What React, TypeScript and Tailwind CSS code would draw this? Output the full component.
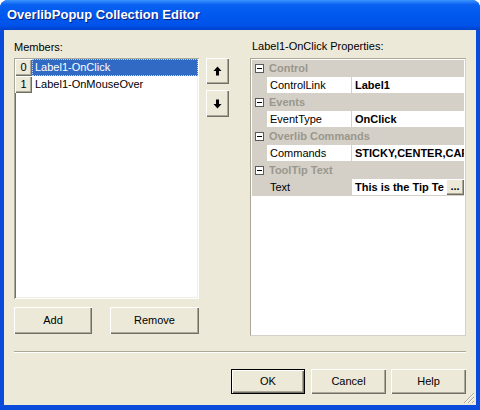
import React from "react";

const raised =
  "bg-[#ECE9D8] shadow-[inset_1px_1px_#ffffff,inset_-1px_-1px_#716f64,inset_-2px_-2px_#aca899]";

function Btn({ label, className = "" }: { label: string; className?: string }) {
  return (
    <div className={`flex items-center justify-center text-[11px] text-black ${raised} ${className}`}>
      {label}
    </div>
  );
}

function Arrow({ down = false }: { down?: boolean }) {
  return (
    <svg width="9" height="10" viewBox="0 0 9 10" className={down ? "rotate-180" : ""}>
      <path d="M4.5 0.5 L8.5 5 L6 5 L6 9.5 L3 9.5 L3 5 L0.5 5 Z" fill="#000" />
    </svg>
  );
}

function Minus() {
  return (
    <div className="w-[9px] h-[9px] border border-[#5a5a5a] bg-white flex items-center justify-center">
      <div className="w-[5px] h-px bg-black" />
    </div>
  );
}

function Category({ name }: { name: string }) {
  return (
    <div className="flex h-[17px] items-center bg-[#D4D0C8]">
      <div className="w-[15px] flex justify-center">
        <Minus />
      </div>
      <span className="pl-[2px] font-bold text-[#9a978c]">{name}</span>
    </div>
  );
}

function Prop({
  name,
  value,
  selected = false,
  ellipsis = false,
}: {
  name: string;
  value: string;
  selected?: boolean;
  ellipsis?: boolean;
}) {
  return (
    <div className="flex h-[17px] border-b border-[#D4D0C8]">
      <div className="w-[15px] bg-[#D4D0C8]" />
      <div
        className={`w-[85px] border-r border-[#D4D0C8] pl-[3px] leading-[16px] ${
          selected ? "bg-[#D4D0C8]" : "bg-white"
        }`}
      >
        {name}
      </div>
      <div className="flex-1 flex overflow-hidden bg-white">
        <span className="flex-1 pl-[3px] font-bold leading-[16px] whitespace-nowrap overflow-hidden">
          {value}
        </span>
        {ellipsis && (
          <div className={`w-[18px] h-[16px] flex items-end justify-center pb-[3px] font-bold leading-none ${raised}`}>
            ...
          </div>
        )}
      </div>
    </div>
  );
}

export default function App() {
  return (
    <div
      className="w-[480px] h-[410px] flex flex-col bg-[#0A4BDB] rounded-t-[8px] overflow-hidden text-[11px] text-black"
      style={{ fontFamily: '"Liberation Sans", Arial, sans-serif' }}
    >
      <div className="h-[30px] flex items-center pl-[7px] bg-[linear-gradient(to_bottom,#3C95FF_0%,#0A62F2_15%,#0058EE_50%,#0053E8_85%,#0040CC_100%)]">
        <span className="text-[13px] font-bold text-white [text-shadow:1px_1px_#0a1f7a]">
          OverlibPopup Collection Editor
        </span>
      </div>

      <div className="relative flex-1 mx-[4px] mb-[5px] bg-[#ECE9D8] px-[10px] pt-[10px] flex flex-col">
        <div className="flex h-[296px]">
          {/* members */}
          <div className="w-[185px] flex flex-col">
            <div className="h-[18px] leading-[13px] pt-[1px]">Members:</div>
            <div className="h-[241px] bg-white shadow-[inset_1px_1px_#aca899,inset_-1px_-1px_#ffffff,inset_2px_2px_#716f64,inset_-2px_-2px_#f1efe2] p-[1px]">
              <div className="flex h-[17px]">
                <div className={`w-[17px] h-[17px] flex items-center justify-center ${raised}`}>0</div>
                <div className="flex-1 bg-[#316AC5] text-white pl-[2px] leading-[15px] border border-dotted border-[#c8d6f0]">
                  Label1-OnClick
                </div>
              </div>
              <div className="flex h-[17px]">
                <div className={`w-[17px] h-[17px] flex items-center justify-center ${raised}`}>1</div>
                <div className="flex-1 pl-[3px] leading-[17px]">Label1-OnMouseOver</div>
              </div>
            </div>
            <div className="flex mt-[8px]">
              <Btn label="Add" className="w-[78px] h-[27px]" />
              <Btn label="Remove" className="w-[89px] h-[27px] ml-[18px]" />
            </div>
          </div>

          {/* arrows */}
          <div className="ml-[7px] pt-[18px] flex flex-col">
            <div className={`w-[23px] h-[26px] flex items-center justify-center ${raised}`}>
              <Arrow />
            </div>
            <div className={`w-[23px] h-[27px] mt-[6px] flex items-center justify-center ${raised}`}>
              <Arrow down />
            </div>
          </div>

          {/* properties */}
          <div className="ml-[21px] w-[216px] flex flex-col">
            <div className="h-[18px] leading-[13px] pl-[2px]">Label1-OnClick Properties:</div>
            <div className="h-[278px] bg-white border border-[#ACA899] border-r-[#D4D0C8] border-b-[#D4D0C8] p-[1px] flex flex-col">
              <Category name="Control" />
              <Prop name="ControlLink" value="Label1" />
              <Category name="Events" />
              <Prop name="EventType" value="OnClick" />
              <Category name="Overlib Commands" />
              <Prop name="Commands" value="STICKY,CENTER,CAPT" />
              <Category name="ToolTip Text" />
              <Prop name="Text" value="This is the Tip Te" selected ellipsis />
            </div>
          </div>
        </div>

        <div className="mt-[15px] h-[2px] border-t border-[#ACA899] border-b border-b-white" />

        <div className="mt-[16px] flex justify-end">
          <div className="w-[74px] h-[25px] border border-black">
            <Btn label="OK" className="w-full h-full" />
          </div>
          <Btn label="Cancel" className="w-[75px] h-[25px] ml-[6px]" />
          <Btn label="Help" className="w-[75px] h-[25px] ml-[5px]" />
        </div>

        <svg width="12" height="12" viewBox="0 0 12 12" className="absolute right-[1px] bottom-[1px]">
          <path d="M11 1 L1 11 M11 5 L5 11 M11 9 L9 11" stroke="#aca899" strokeWidth="1" />
          <path d="M11 2 L2 11 M11 6 L6 11 M11 10 L10 11" stroke="#ffffff" strokeWidth="1" />
        </svg>
      </div>
    </div>
  );
}
